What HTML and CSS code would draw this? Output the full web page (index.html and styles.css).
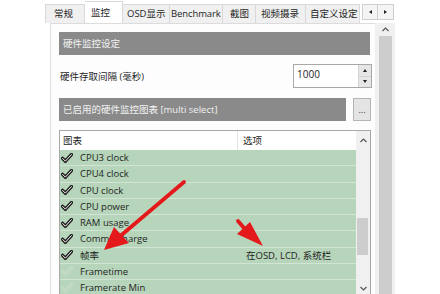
FILE: index.html
```html
<!DOCTYPE html>
<html lang="zh-CN">
<head>
    <meta charset="UTF-8">
    <title>硬件监控</title>
    <link rel="stylesheet" href="styles.css">
</head>
<body>

<div class="app">
    <div class="tabbar">
        <div class="tab tab-general">常规</div>
        <div class="tab tab-monitor active">监控</div>
        <div class="tab tab-osd">OSD显示</div>
        <div class="tab tab-bench">Benchmark</div>
        <div class="tab tab-shot">截图</div>
        <div class="tab tab-video">视频摄录</div>
        <div class="tab tab-custom">自定义设定</div>
        <div class="tab-nav">
            <span class="nav-btn"><i class="tri tri-left"></i></span>
            <span class="nav-btn"><i class="tri tri-right"></i></span>
        </div>
    </div>

    <div class="content">
        <div class="panel">
            <div class="band">硬件监控设定</div>

            <div class="field">
                <span>硬件存取间隔 (毫秒)</span>
                <div class="spin">
                    <span class="spin-val">1000</span>
                    <div class="spin-btns">
                        <span class="spin-btn"><i class="tri tri-up"></i></span>
                        <span class="spin-btn"><i class="tri tri-down"></i></span>
                    </div>
                </div>
            </div>

            <div class="band-row">
                <div class="band band-grow">已启用的硬件监控图表 [multi select]</div>
                <button class="more-btn">...</button>
            </div>

            <div class="list">
                <div class="list-main">
                    <div class="list-head">
                        <span class="col-name">图表</span>
                        <span class="col-opt">选项</span>
                    </div>
                    <div class="row"><span class="check"><svg width="12" height="10" viewBox="0 0 12 10"><path d="M1.6 5.4 L4.4 8.2 L10.4 1.6" class="ck-outer"/><path d="M1.6 5.4 L4.4 8.2 L10.4 1.6" class="ck-inner"/></svg></span><span class="name">CPU3 clock</span><span class="opt"></span></div>
                    <div class="row"><span class="check"><svg width="12" height="10" viewBox="0 0 12 10"><path d="M1.6 5.4 L4.4 8.2 L10.4 1.6" class="ck-outer"/><path d="M1.6 5.4 L4.4 8.2 L10.4 1.6" class="ck-inner"/></svg></span><span class="name">CPU4 clock</span><span class="opt"></span></div>
                    <div class="row"><span class="check"><svg width="12" height="10" viewBox="0 0 12 10"><path d="M1.6 5.4 L4.4 8.2 L10.4 1.6" class="ck-outer"/><path d="M1.6 5.4 L4.4 8.2 L10.4 1.6" class="ck-inner"/></svg></span><span class="name">CPU clock</span><span class="opt"></span></div>
                    <div class="row"><span class="check"><svg width="12" height="10" viewBox="0 0 12 10"><path d="M1.6 5.4 L4.4 8.2 L10.4 1.6" class="ck-outer"/><path d="M1.6 5.4 L4.4 8.2 L10.4 1.6" class="ck-inner"/></svg></span><span class="name">CPU power</span><span class="opt"></span></div>
                    <div class="row"><span class="check"><svg width="12" height="10" viewBox="0 0 12 10"><path d="M1.6 5.4 L4.4 8.2 L10.4 1.6" class="ck-outer"/><path d="M1.6 5.4 L4.4 8.2 L10.4 1.6" class="ck-inner"/></svg></span><span class="name">RAM usage</span><span class="opt"></span></div>
                    <div class="row"><span class="check"><svg width="12" height="10" viewBox="0 0 12 10"><path d="M1.6 5.4 L4.4 8.2 L10.4 1.6" class="ck-outer"/><path d="M1.6 5.4 L4.4 8.2 L10.4 1.6" class="ck-inner"/></svg></span><span class="name">Commit charge</span><span class="opt"></span></div>
                    <div class="row"><span class="check"><svg width="12" height="10" viewBox="0 0 12 10"><path d="M1.6 5.4 L4.4 8.2 L10.4 1.6" class="ck-outer"/><path d="M1.6 5.4 L4.4 8.2 L10.4 1.6" class="ck-inner"/></svg></span><span class="name">帧率</span><span class="opt">在OSD, LCD, 系统栏</span></div>
                    <div class="row"><span class="check off"><svg width="12" height="10" viewBox="0 0 12 10"><path d="M1.6 5.4 L4.4 8.2 L10.4 1.6" class="ck-outer"/><path d="M1.6 5.4 L4.4 8.2 L10.4 1.6" class="ck-inner"/></svg></span><span class="name">Frametime</span><span class="opt"></span></div>
                    <div class="row"><span class="check off"><svg width="12" height="10" viewBox="0 0 12 10"><path d="M1.6 5.4 L4.4 8.2 L10.4 1.6" class="ck-outer"/><path d="M1.6 5.4 L4.4 8.2 L10.4 1.6" class="ck-inner"/></svg></span><span class="name">Framerate Min</span><span class="opt"></span></div>
                </div>
                <div class="list-scroll">
                    <span class="sb-btn"><svg width="7" height="5" viewBox="0 0 7 5"><polyline points="0.5,4 3.5,1 6.5,4" class="chev"/></svg></span>
                    <div class="sb-track"><div class="sb-thumb"></div></div>
                    <span class="sb-btn sb-down"><svg width="7" height="5" viewBox="0 0 7 5"><polyline points="0.5,1 3.5,4 6.5,1" class="chev"/></svg></span>
                </div>
            </div>
        </div>

        <div class="outer-scroll">
            <span class="sb-btn"><svg width="7" height="5" viewBox="0 0 7 5"><polyline points="0.5,4 3.5,1 6.5,4" class="chev"/></svg></span>
            <div class="outer-thumb"></div>
        </div>
    </div>

    <!-- red annotation arrows drawn over the screenshot -->
    <svg class="annot" width="440" height="294" viewBox="0 0 440 294">
        <line x1="184" y1="182" x2="118" y2="238" class="arrow-line"/>
        <polygon points="104,250 114,227 129,243" class="arrow-head"/>
        <line x1="238" y1="221" x2="244" y2="228" class="arrow-line"/>
        <polygon points="263,246 237,234 250,222" class="arrow-head"/>
    </svg>
</div>

</body>
</html>
```

FILE: styles.css
```css
* {
    padding: 0;
    margin: 0;
    box-sizing: border-box;
}
body {
    background: #ffffff;
    font-family: "Open Sans", "Noto Sans CJK SC", sans-serif;
    font-size: 9.5px;
    color: #1e1e1e;
}
.app {
    width: 440px;
    height: 294px;
    position: relative;
    overflow: hidden;
}

/* tabs */
.tabbar {
    display: flex;
    align-items: flex-end;
    height: 23px;
    padding-left: 45px;
}
.tab {
    height: 19px;
    line-height: 18px;
    padding-left: 6px;
    background: #f0f0f0;
    border: 1px solid #d9d9d9;
    border-bottom: none;
    border-left: none;
    white-space: nowrap;
    overflow: hidden;
}
.tab-general { width: 40px; border-left: 1px solid #d9d9d9; padding-left: 8px; }
.tab-monitor { width: 38px; }
.tab-osd { width: 47px; padding-left: 4px; }
.tab-bench { width: 53px; padding-left: 1px; letter-spacing: -0.1px; }
.tab-shot { width: 33px; padding-left: 7px; }
.tab-video { width: 50px; padding-left: 5px; }
.tab-custom { width: 54px; padding-left: 4px; }
.tab.active {
    height: 22px;
    line-height: 21px;
    background: #ffffff;
    padding-left: 6px;
}
.tab-nav {
    display: flex;
    margin-left: 2px;
    margin-bottom: 3px;
}
.nav-btn {
    width: 16px;
    height: 16px;
    border: 1px solid #cfcfcf;
    background: #f4f4f4;
    display: flex;
    align-items: center;
    justify-content: center;
}
.nav-btn + .nav-btn {
    border-left: none;
}
.tri {
    display: block;
    width: 0;
    height: 0;
}
.tri-left {
    border-top: 2.5px solid transparent;
    border-bottom: 2.5px solid transparent;
    border-right: 3px solid #222;
}
.tri-right {
    border-top: 2.5px solid transparent;
    border-bottom: 2.5px solid transparent;
    border-left: 3px solid #222;
}
.tri-up {
    border-left: 2.5px solid transparent;
    border-right: 2.5px solid transparent;
    border-bottom: 3px solid #222;
}
.tri-down {
    border-left: 2.5px solid transparent;
    border-right: 2.5px solid transparent;
    border-top: 3px solid #222;
}

/* page body */
.content {
    display: flex;
    height: 271px;
    padding-left: 50px;
}
.panel {
    width: 325px;
    border-left: 1px solid #dcdcdc;
    border-top: 1px solid #dcdcdc;
    background: #fdfdfd;
    padding: 8px 3px 0 8px;
}
.band {
    height: 23px;
    line-height: 23px;
    background: #8a8a8a;
    color: #f2f2f2;
    padding-left: 4px;
    margin-right: 2px;
}
.field {
    display: flex;
    justify-content: space-between;
    align-items: center;
    height: 24px;
    margin-top: 9px;
    padding-left: 1px;
}
.spin {
    display: flex;
    width: 79px;
    height: 24px;
    border: 1px solid #a8a8a8;
    background: #ffffff;
}
.spin-val {
    flex: 1;
    padding: 2px 0 0 3px;
    font-size: 10px;
}
.spin-btns {
    width: 13px;
    display: flex;
    flex-direction: column;
}
.spin-btn {
    flex: 1;
    background: #e6e6e6;
    border-left: 1px solid #d2d2d2;
    display: flex;
    align-items: center;
    justify-content: center;
}
.spin-btn + .spin-btn {
    border-top: 1px solid #d2d2d2;
}
.band-row {
    display: flex;
    margin-top: 10px;
    height: 23px;
}
.band-grow {
    flex: 1;
    margin-right: 7px;
}
.more-btn {
    width: 18px;
    height: 23px;
    margin-right: 1px;
    border: 1px solid #b4b4b4;
    background: #e4e4e4;
    font-family: inherit;
    font-size: 9px;
    color: #333;
    line-height: 14px;
}

/* chart list */
.list {
    display: flex;
    width: 312px;
    height: 166px;
    margin-top: 9px;
    border: 1px solid #a8a8a8;
    background: #ffffff;
    overflow: hidden;
}
.list-main {
    flex: 1;
}
.list-head {
    display: flex;
    height: 19px;
    line-height: 19px;
}
.col-name {
    width: 178px;
    padding-left: 3px;
    border-right: 1px solid #e3e3e3;
}
.col-opt {
    padding-left: 5px;
}
.row {
    display: flex;
    align-items: center;
    height: 16.25px;
    background: #b6d5ba;
    border-bottom: 1px solid #d2e5d4;
}
.check {
    width: 20px;
    padding-left: 1px;
    display: flex;
    align-items: center;
}
.ck-outer {
    fill: none;
    stroke: #1c1c1c;
    stroke-width: 3.4;
    stroke-linecap: round;
    stroke-linejoin: round;
}
.ck-inner {
    fill: none;
    stroke: #ffffff;
    stroke-width: 1;
    stroke-linecap: round;
    stroke-linejoin: round;
}
.check.off .ck-outer {
    stroke: #c6dcc8;
}
.check.off .ck-inner {
    stroke: #b9d6bc;
}
.name {
    width: 158px;
}
.opt {
    padding-left: 8px;
}
.list-scroll {
    width: 14px;
    background: #f0f0f0;
    display: flex;
    flex-direction: column;
}
.sb-btn {
    height: 18px;
    display: flex;
    align-items: center;
    justify-content: center;
}
.sb-down {
    height: 14px;
}
.chev {
    fill: none;
    stroke: #555;
    stroke-width: 1.2;
}
.sb-track {
    flex: 1;
    padding: 69px 2px 0 1px;
}
.sb-thumb {
    height: 37px;
    background: #cdcdcd;
}

/* window scrollbar */
.outer-scroll {
    width: 20px;
    background: #f0f0f0;
    display: flex;
    flex-direction: column;
    padding: 0 3px 0 4px;
}
.outer-scroll .sb-btn {
    height: 13px;
}
.outer-thumb {
    flex: 1;
    background: #cdcdcd;
}

/* annotations */
.annot {
    position: absolute;
    top: 0;
    left: 0;
    pointer-events: none;
}
.arrow-line {
    stroke: #e3191c;
    stroke-width: 3.8;
    stroke-linecap: round;
}
.arrow-head {
    fill: #e3191c;
}
```
